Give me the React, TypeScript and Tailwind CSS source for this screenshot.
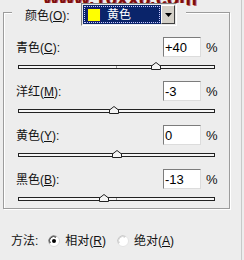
import React from "react";

const FONT = { fontFamily: '"Liberation Sans", "Noto Sans CJK SC", sans-serif' };

function Label({ main, k }: { main: string; k: string }) {
  return (
    <span className="text-[12px] leading-[14px] text-[#111]">
      {main}(<u>{k}</u>):
    </span>
  );
}

function Slider({ value }: { value: number }) {
  const center = 98;
  const x = center + value * 0.98;
  return (
    <div className="relative ml-[2px] mt-[8px] h-[4px] w-[197px] border border-[#222] bg-[#f6f6f6]">
      <div className="absolute left-[97px] top-0 h-[2px] w-[1px] bg-[#9a9a9a]" />
      <svg
        className="absolute"
        style={{ left: x - 5, top: -4 }}
        width="10"
        height="8"
        viewBox="0 0 10 8"
      >
        <path d="M0.5 7.5 V4 L5 0.5 L9.5 4 V7.5 Z" fill="#f4f4f4" stroke="#222" strokeWidth="1" />
      </svg>
    </div>
  );
}

function Row({ main, k, value }: { main: string; k: string; value: string }) {
  return (
    <div className="flex items-center h-[20px]">
      <div className="w-[147px]">
        <Label main={main} k={k} />
      </div>
      <div className="flex h-[20px] w-[38px] items-center border-t border-l border-t-[#7c7c7c] border-l-[#7c7c7c] border-b border-r border-b-[#dcdcdc] border-r-[#dcdcdc] bg-white pl-[1px]">
        <span className="text-[13px] leading-none text-black" style={{ fontFamily: '"Liberation Sans", sans-serif' }}>
          {value}
        </span>
      </div>
      <span className="ml-[5px] text-[13px] leading-none text-[#111]" style={{ fontFamily: '"Liberation Sans", sans-serif' }}>
        %
      </span>
    </div>
  );
}

function Radio({ checked }: { checked: boolean }) {
  return (
    <svg width="12" height="12" viewBox="0 0 12 12">
      <circle cx="6" cy="6" r="5.5" fill="#ffffff" stroke={checked ? "#d8d8d8" : "#e4e4e4"} />
      <path d="M1.6 8.5 A5 5 0 0 1 8.5 1.6" fill="none" stroke={checked ? "#808080" : "#c4c4c4"} strokeWidth="1" />
      <path d="M2.4 8 A4 4 0 0 1 8 2.4" fill="none" stroke={checked ? "#404040" : "#d6d6d6"} strokeWidth="1" />
      {checked && <circle cx="6" cy="6" r="2" fill="#000" />}
    </svg>
  );
}

export default function App() {
  const rows = [
    { main: "青色", k: "C", value: "+40", v: 40 },
    { main: "洋红", k: "M", value: "-3", v: -3 },
    { main: "黄色", k: "Y", value: "0", v: 0 },
    { main: "黑色", k: "B", value: "-13", v: -13 },
  ];
  return (
    <div className="relative h-[260px] w-[244px] overflow-hidden bg-[#ededed] pl-[3px] pt-[12px]" style={FONT}>
      <div
        className="absolute left-[43px] top-[-12px] text-[20px] font-bold leading-[20px] text-[#7e0c0c]"
        style={{ fontFamily: '"Liberation Sans", sans-serif', textShadow: "1px 1px 0 #c06060" }}
      >
        www.16xx8.com
      </div>
      <div className="absolute right-[2px] top-0 h-full w-[1px] bg-[#c8c8c8]" />

      <div className="relative h-[197px] w-[227px] border border-[#9c9c9c] pl-[12px] pt-[24px] shadow-[inset_1px_1px_0_#ffffff,1px_1px_0_#ffffff]">
        <div className="absolute left-[8px] top-[-10px] flex h-[23px] w-[174px] items-center bg-[#ededed] pl-[13px]">
          <div className="w-[56px]">
            <Label main="颜色" k="O" />
          </div>
          <div className="flex h-[23px] w-[96px] border-t border-l border-t-[#808080] border-l-[#808080] border-b border-r border-b-[#ffffff] border-r-[#ffffff] p-[1px] bg-[#e8e8e8]">
            <div className="flex flex-1 items-center bg-[#0a246a] outline outline-1 outline-dotted outline-[#c8c8ff] outline-offset-[-2px] pl-[4px]">
              <div className="h-[14px] w-[14px] bg-[#ffff00] border border-[#20206a]" />
              <span className="ml-[6px] text-[12px] leading-none text-white">黄色</span>
            </div>
            <div className="flex w-[14px] items-center justify-center bg-[#d4d0c8] border-t border-l border-t-white border-l-white border-b border-r border-b-[#404040] border-r-[#404040]">
              <svg width="7" height="4" viewBox="0 0 7 4">
                <path d="M0 0 H7 L3.5 4 Z" fill="#000" />
              </svg>
            </div>
          </div>
        </div>

        {rows.map((r, i) => (
          <div key={r.k} className={i === 0 ? "" : "mt-[12px]"}>
            <Row main={r.main} k={r.k} value={r.value} />
            <Slider value={r.v} />
          </div>
        ))}
      </div>

      <div className="mt-[25px] flex h-[14px] items-center pl-[8px] text-[12px] leading-[14px] text-[#111]">
        <span>方法:</span>
        <span className="ml-[10px] flex items-center">
          <Radio checked />
        </span>
        <span className="ml-[5px]">
          相对(<u>R</u>)
        </span>
        <span className="ml-[11px] flex items-center">
          <Radio checked={false} />
        </span>
        <span className="ml-[5px]">
          绝对(<u>A</u>)
        </span>
      </div>
    </div>
  );
}
